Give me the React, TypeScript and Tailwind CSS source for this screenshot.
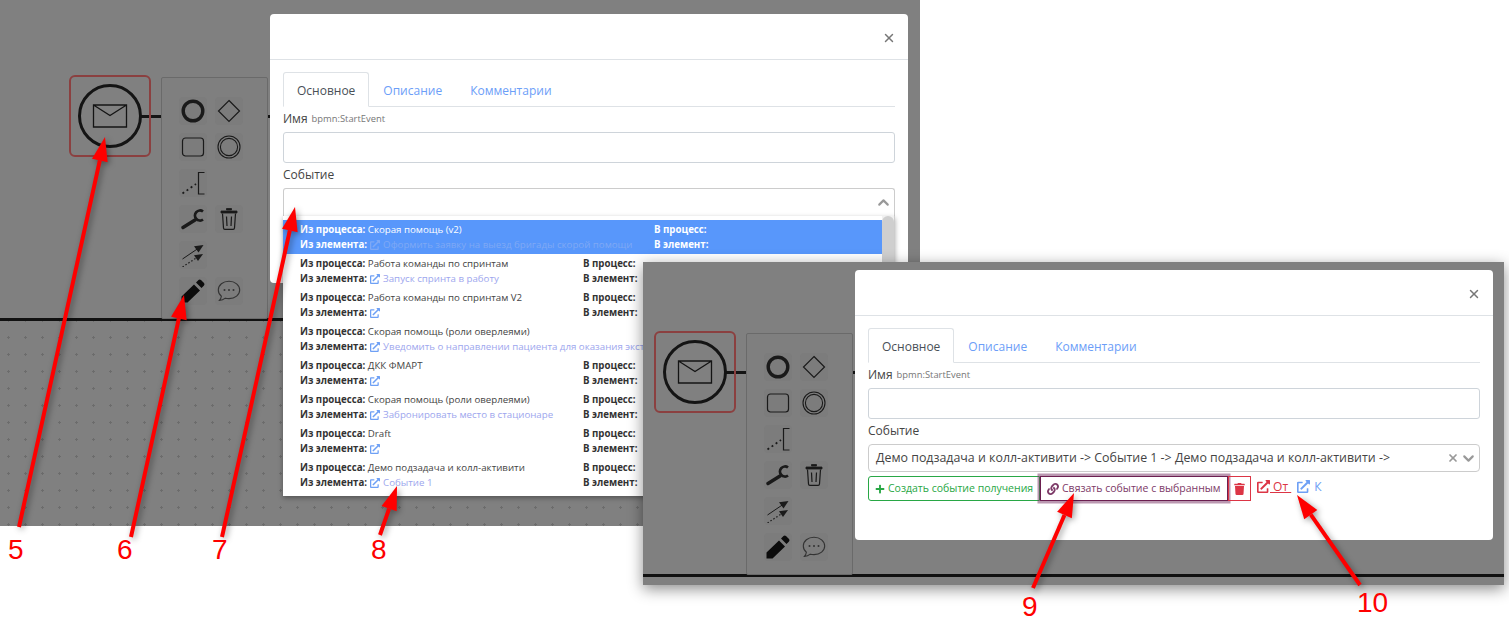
import { FaExternalLinkAlt, FaLink, FaPlus, FaTrash } from "react-icons/fa";
import { X, ChevronDown, ChevronUp } from "lucide-react";

const options = [
  { from: "Скорая помощь (v2)", el: "Оформить заявку на выезд бригады скорой помощи", col: "w-[354px]", active: true },
  { from: "Работа команды по спринтам", el: "Запуск спринта в работу", col: "w-[283px]" },
  { from: "Работа команды по спринтам V2", el: "", col: "w-[283px]" },
  { from: "Скорая помощь (роли оверлеями)", el: "Уведомить о направлении пациента для оказания экстр", col: "w-[420px]" },
  { from: "ДКК ФМАРТ", el: "", col: "w-[283px]" },
  { from: "Скорая помощь (роли оверлеями)", el: "Забронировать место в стационаре", col: "w-[283px]" },
  { from: "Draft", el: "", col: "w-[283px]" },
  { from: "Демо подзадача и колл-активити", el: "Событие 1", col: "w-[283px]" },
];

const arrows = [
  { x1: 19, y1: 527, x2: 105, y2: 137 },
  { x1: 131, y1: 537, x2: 184, y2: 295 },
  { x1: 222, y1: 537, x2: 295, y2: 207 },
  { x1: 380, y1: 535, x2: 397, y2: 486 },
  { x1: 1033, y1: 588, x2: 1074, y2: 493 },
  { x1: 1360, y1: 585, x2: 1297, y2: 495 },
];

function Arrow({ x1, y1, x2, y2 }: { x1: number; y1: number; x2: number; y2: number }) {
  const len = Math.hypot(x2 - x1, y2 - y1);
  const ux = (x2 - x1) / len;
  const uy = (y2 - y1) / len;
  const bx = x2 - ux * 24;
  const by = y2 - uy * 24;
  const points = `${x2},${y2} ${bx - uy * 8},${by + ux * 8} ${bx + uy * 8},${by - ux * 8}`;
  return (
    <g>
      <line x1={x1} y1={y1} x2={bx} y2={by} stroke="#fe0000" strokeWidth="4" />
      <polygon points={points} fill="#fe0000" />
    </g>
  );
}

const stroke = "#1a1a1a";

function Palette() {
  const cell = "flex h-[28px] w-[28px] items-center justify-center rounded-[4px] bg-[#7c7c7c]";
  return (
    <div className="absolute left-[161px] top-[77px] h-[242px] w-[107px] rounded-[2px] border border-[#6a6a6a] bg-[#7f7f7f] pl-[13px] pt-[15px]">
      <div className="grid grid-cols-[36px_36px] auto-rows-[36px]">
        <div className="flex items-center justify-center"><div className={cell}>
          <svg width="24" height="24" viewBox="0 0 24 24"><circle cx="12" cy="12" r="9.8" fill="none" stroke={stroke} strokeWidth="3.4" /></svg>
        </div></div>
        <div className="flex items-center justify-center"><div className={cell}>
          <svg width="24" height="24" viewBox="0 0 24 24"><path d="M12 1.5 22.5 12 12 22.5 1.5 12Z" fill="none" stroke={stroke} strokeWidth="1.2" /></svg>
        </div></div>
        <div className="flex items-center justify-center"><div className={cell}>
          <svg width="24" height="24" viewBox="0 0 24 24"><rect x="1.5" y="3" width="21" height="18" rx="3" fill="none" stroke={stroke} strokeWidth="1.2" /></svg>
        </div></div>
        <div className="flex items-center justify-center"><div className={cell}>
          <svg width="24" height="24" viewBox="0 0 24 24"><circle cx="12" cy="12" r="11" fill="none" stroke={stroke} strokeWidth="1.1" /><circle cx="12" cy="12" r="8.6" fill="none" stroke={stroke} strokeWidth="1.1" /></svg>
        </div></div>
        <div className="flex items-center justify-center"><div className={cell}>
          <svg width="24" height="24" viewBox="0 0 24 24"><path d="M1.5 22.5 15 13" fill="none" stroke={stroke} strokeWidth="1.8" strokeDasharray="2 3" /><path d="M23.5 1.5H17.5V23H23.5" fill="none" stroke={stroke} strokeWidth="1.2" /></svg>
        </div></div>
        <div />
        <div className="flex items-center justify-center"><div className={cell}>
          <svg width="24" height="24" viewBox="0 0 24 24"><path d="M2 20.5 14 13" fill="none" stroke={stroke} strokeWidth="3.4" strokeLinecap="round" /><path d="M22 4.5A5 5 0 1 0 22 12.5" fill="none" stroke={stroke} strokeWidth="2.8" /></svg>
        </div></div>
        <div className="flex items-center justify-center"><div className={cell}>
          <svg width="24" height="24" viewBox="0 0 24 24"><path d="M9.5 3h5V1.5h-5ZM4 4h16v2H4Z" fill={stroke} stroke={stroke} strokeWidth="0.8" /><path d="M5.5 6.5 6.5 21a1.4 1.4 0 0 0 1.4 1.3h8.2A1.4 1.4 0 0 0 17.5 21l1-14.5M9.5 9.5l.5 9.5M14.5 9.5l-.5 9.5" fill="none" stroke={stroke} strokeWidth="1.2" /></svg>
        </div></div>
        <div className="flex items-center justify-center"><div className={cell}>
          <svg width="24" height="24" viewBox="0 0 24 24"><path d="M1.5 16 17 5.5" fill="none" stroke={stroke} strokeWidth="1" /><path d="M22.5 2 13 3.2 17.5 9.5Z" fill={stroke} /><path d="M1.5 24 16 14.5" fill="none" stroke={stroke} strokeWidth="1.2" strokeDasharray="1.5 2" /><path d="M22 11 13 12.2 17 18Z" fill={stroke} /></svg>
        </div></div>
        <div />
        <div className="flex items-center justify-center"><div className={cell}>
          <svg width="24" height="24" viewBox="0 0 24 24"><path d="M0.5 17.5 13 5.5 19 11.5 6.5 23.5H0.5ZM15 3.5 17.5 1Q18.7 0 20 1L23 4Q24 5.2 23 6.5L20.5 9Z" fill="#0c0c0c" /></svg>
        </div></div>
        <div className="flex items-center justify-center"><div className={cell}>
          <svg width="24" height="24" viewBox="0 0 24 24"><path d="M12 2.2C5.9 2.2 1.3 6 1.3 11c0 2.5 1.2 4.7 3.1 6.2-.2 1.6-1 3-2.1 4.3 2.3-.1 4.5-1 6-2.3 1.2.3 2.4.4 3.7.4 6.1 0 10.7-3.8 10.7-8.6S18.1 2.2 12 2.2Z" fill="none" stroke="#333" strokeWidth="1.1" /><circle cx="7.5" cy="11" r="1" fill="#333" /><circle cx="12" cy="11" r="1" fill="#333" /><circle cx="16.5" cy="11" r="1" fill="#333" /></svg>
        </div></div>
      </div>
    </div>
  );
}

// bpmn canvas, coordinates are the ones of the first window
function Scene() {
  return (
    <>
      <div className="absolute left-0 right-0 top-[318px] h-[3px] bg-[#111]" />
      <div className="absolute left-[141px] top-[114.5px] h-[3px] w-[140px] bg-[#141414]" />
      <div className="absolute left-[69px] top-[75px] h-[82px] w-[82px] rounded-[6px] border-2 border-[#8b4040]">
        <svg width="78" height="78" viewBox="1 1 78 78">
          <circle cx="40" cy="40" r="30.5" fill="#808080" stroke="#141414" strokeWidth="3" />
          <path d="M23.5 29H56.5V51H23.5ZM23.5 29 40 39.5 56.5 29" fill="none" stroke="#141414" strokeWidth="1.3" />
        </svg>
      </div>
      <Palette />
    </>
  );
}

function Label({ children }: { children: React.ReactNode }) {
  return <div className="flex h-[25px] items-center gap-[4px] pb-[2px] text-[12px] text-[#444]">{children}</div>;
}

function Modal({ children }: { children: React.ReactNode }) {
  return (
    <>
      <div className="flex h-[46px] items-center justify-end border-b border-[#dee2e6] pr-[12px] pt-[2px]">
        <X className="h-[14px] w-[14px] text-[#777]" strokeWidth={2.5} />
      </div>
      <div className="px-[13px] pt-[12px]">
        <div className="flex h-[35px] border-b border-[#dee2e6] text-[12px]">
          <div className="flex h-[35px] items-center rounded-t-[3px] border border-b-white border-[#dee2e6] bg-white px-[13px] pt-[3px] text-[#495057]">Основное</div>
          <div className="flex items-center px-[14px] pt-[3px] text-[#6c9ef8]">Описание</div>
          <div className="flex items-center px-[14px] pt-[3px] text-[#6c9ef8]">Комментарии</div>
        </div>
        <Label>
          Имя <span className="pt-[1px] text-[9.4px] text-[#777]">bpmn:StartEvent</span>
        </Label>
        <div className="h-[31px] rounded-[3px] border border-[#ced4da]" />
        <Label>Событие</Label>
        {children}
      </div>
    </>
  );
}

function Option({ from, el, col, active }: { from: string; el: string; col: string; active?: boolean }) {
  const bold = active ? "text-white" : "text-[#333]";
  return (
    <div className={`flex h-[34px] flex-col justify-center whitespace-nowrap pl-[17px] text-[9.7px] leading-[15px] ${active ? "bg-[#5897fb]" : ""}`}>
      <div className="flex">
        <div className={`${col} shrink-0 overflow-hidden ${active ? "text-white" : "text-[#444]"}`}>
          <b className={bold}>Из процесса:</b> {from}
        </div>
        <b className={bold}>В процесс:</b>
      </div>
      <div className="flex">
        <div className={`${col} flex shrink-0 items-center overflow-hidden`}>
          <b className={bold}>Из элемента:</b>
          <FaExternalLinkAlt className={`ml-[3px] h-[10px] w-[10px] shrink-0 ${active ? "text-[#7fa9f5]" : "text-[#6ea0f5]"}`} />
          <span className={`ml-[3px] ${active ? "text-[#7fa9f5]" : "text-[#9da6ee]"}`}>{el}</span>
        </div>
        <b className={bold}>В элемент:</b>
      </div>
    </div>
  );
}

export default function App() {
  return (
    <div className="relative h-[636px] w-[1509px] overflow-hidden bg-white font-['Open_Sans',sans-serif]">
      {/* first window */}
      <div className="absolute left-0 top-0 flex h-[526px] w-[920px] flex-col bg-[#808080]">
        <div className="h-[321px] shrink-0" />
        <div className="flex-1 bg-[radial-gradient(circle,#6c6c6c_1px,transparent_1.2px)] bg-[size:17px_17px] bg-[position:0px_8px]" />
        <Scene />
        <div className="absolute left-[270px] top-[14px] h-[269px] w-[638px] rounded-[4px] bg-white">
          <Modal>
            <div className="relative h-[32px] rounded-t-[3px] border border-b-0 border-[#ccc]">
              <ChevronUp className="absolute right-[2px] top-[5px] h-[17px] w-[17px] text-[#999]" strokeWidth={3} />
            </div>
          </Modal>
        </div>
        <div className="absolute left-[283px] top-[216px] flex h-[280px] w-[612px] bg-white shadow-[0_2px_5px_rgba(0,0,0,0.35)]">
          <div className="min-w-0 flex-1 overflow-hidden pt-[4px]">
            {options.map((o, i) => (
              <Option key={i} {...o} />
            ))}
          </div>
          <div className="w-[13px] shrink-0 border-r border-[#ccc] bg-[#f1f1f1]">
            <div className="h-[160px] rounded-[6px] bg-[#cfcfcf]" />
          </div>
        </div>
      </div>

      {/* second window */}
      <div className="absolute left-[643px] top-[262px] h-[323px] w-[861px] overflow-hidden bg-[#808080] shadow-[0_4px_14px_rgba(0,0,0,0.45)]">
        <div className="absolute left-[-58px] top-[-6px] h-[329px] w-[919px]">
          <Scene />
        </div>
        <div className="absolute left-[212px] top-[8px] h-[270px] w-[638px] rounded-[4px] bg-white">
          <Modal>
            <div className="flex h-[28px] items-center rounded-[4px] border border-[#ccc] pl-[7px] pr-[2px] text-[12.4px] text-[#444]">
              <span className="flex-1 whitespace-nowrap">Демо подзадача и колл-активити -&gt; Событие 1 -&gt; Демо подзадача и колл-активити -&gt;</span>
              <X className="h-[12px] w-[12px] text-[#999]" strokeWidth={3.5} />
              <ChevronDown className="ml-[1px] h-[17px] w-[17px] text-[#999]" strokeWidth={3} />
            </div>
            <div className="mt-[4px] flex h-[25px] items-start whitespace-nowrap text-[10.5px]">
              <div className="flex h-[25px] w-[172px] shrink-0 items-center gap-[3px] rounded-l-[3px] border border-[#28a745] pl-[6px] text-[#28a745]">
                <FaPlus className="h-[10px] w-[10px]" /> Создать событие получения
              </div>
              <div className="flex h-[25px] w-[188px] shrink-0 items-center gap-[3px] border border-[#6b1f50] pl-[6px] text-[#7d3a68] shadow-[0_0_0_2.5px_rgba(120,50,100,0.5)]">
                <FaLink className="h-[12px] w-[12px]" /> Связать событие с выбранным
              </div>
              <div className="flex h-[25px] w-[23px] shrink-0 items-center justify-center border border-[#dc3545] text-[#dc3545]">
                <FaTrash className="h-[12px] w-[11px]" />
              </div>
              <div className="ml-[6px] flex h-[21px] items-center text-[12px] text-[#dc3545]">
                <FaExternalLinkAlt className="h-[13px] w-[13px]" />
                <span className="underline">&nbsp;От&nbsp;</span>
              </div>
              <div className="ml-[6px] flex h-[21px] items-center gap-[4px] text-[12px] text-[#6ea0f5]">
                <FaExternalLinkAlt className="h-[13px] w-[13px]" />К
              </div>
            </div>
          </Modal>
        </div>
      </div>

      {/* annotations */}
      <svg className="pointer-events-none absolute inset-0 drop-shadow-[2px_2px_3px_rgba(0,0,0,0.4)]" width="1509" height="636" viewBox="0 0 1509 636">
        {arrows.map((a, i) => (
          <Arrow key={i} {...a} />
        ))}
      </svg>
      <div className="absolute left-[8px] top-[534px] font-['Liberation_Sans',sans-serif] text-[28px] leading-[32px] text-[#fe0000]">5</div>
      <div className="absolute left-[117px] top-[534px] font-['Liberation_Sans',sans-serif] text-[28px] leading-[32px] text-[#fe0000]">6</div>
      <div className="absolute left-[212px] top-[534px] font-['Liberation_Sans',sans-serif] text-[28px] leading-[32px] text-[#fe0000]">7</div>
      <div className="absolute left-[371px] top-[534px] font-['Liberation_Sans',sans-serif] text-[28px] leading-[32px] text-[#fe0000]">8</div>
      <div className="absolute left-[1022px] top-[591px] font-['Liberation_Sans',sans-serif] text-[28px] leading-[32px] text-[#fe0000]">9</div>
      <div className="absolute left-[1357px] top-[587px] font-['Liberation_Sans',sans-serif] text-[28px] leading-[32px] text-[#fe0000]">10</div>
    </div>
  );
}
